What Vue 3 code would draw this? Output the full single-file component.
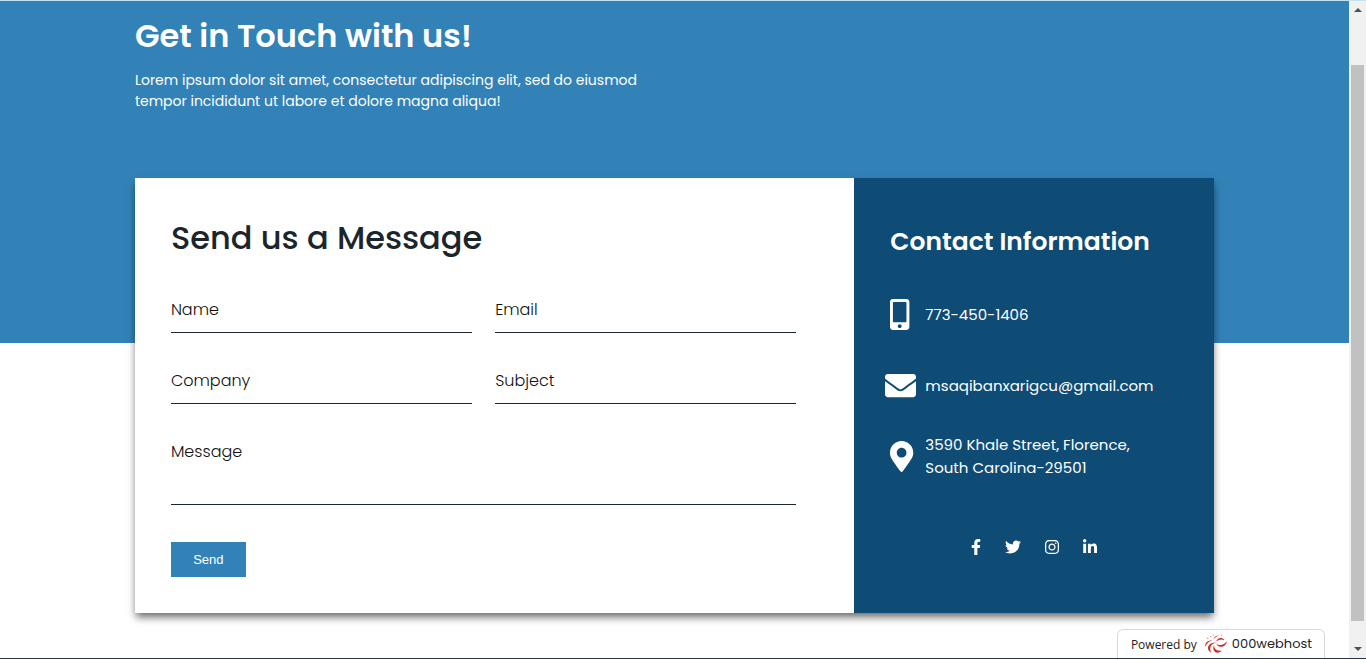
<script setup>
import { ref } from 'vue'

const fields = [
  { id: 'name', label: 'Name', type: 'text' },
  { id: 'email', label: 'Email', type: 'email' },
  { id: 'company', label: 'Company', type: 'text' },
  { id: 'subject', label: 'Subject', type: 'text' }
]
const form = ref({ name: '', email: '', company: '', subject: '', message: '' })

const contacts = [
  {
    id: 'phone',
    viewBox: '0 0 320 512',
    path: 'M272 0H48C21.500 0 0 21.500 0 48v416c0 26.500 21.500 48 48 48h224c26.500 0 48-21.500 48-48V48c0-26.500-21.500-48-48-48zM160 480c-17.700 0-32-14.300-32-32s14.300-32 32-32 32 14.300 32 32-14.300 32-32 32zm112-108c0 6.600-5.400 12-12 12H60c-6.600 0-12-5.400-12-12V60c0-6.600 5.400-12 12-12h200c6.600 0 12 5.400 12 12v312z',
    lines: ['773-450-1406']
  },
  {
    id: 'mail',
    viewBox: '0 0 512 512',
    path: 'M502.300 190.800c3.900-3.100 9.700-.2 9.700 4.700V400c0 26.500-21.500 48-48 48H48c-26.500 0-48-21.500-48-48V195.600c0-5 5.700-7.800 9.700-4.700 22.400 17.400 52.100 39.500 154.100 113.600 21.100 15.400 56.700 47.800 92.200 47.600 35.700.3 72-32.800 92.300-47.600 102-74.100 131.600-96.300 154-113.700zM256 320c23.200.4 56.600-29.200 73.400-41.400 132.700-96.300 142.800-104.700 173.400-128.700 5.800-4.500 9.200-11.500 9.200-18.900v-19c0-26.500-21.500-48-48-48H48c-26.500 0-48 21.500-48 48v19c0 7.400 3.400 14.300 9.200 18.900 30.600 23.900 40.700 32.400 173.400 128.700 16.800 12.200 50.200 41.800 73.400 41.400z',
    lines: ['msaqibanxarigcu@gmail.com']
  },
  {
    id: 'place',
    viewBox: '0 0 384 512',
    path: 'M172.268 501.670C26.970 291.031 0 269.413 0 192 0 85.961 85.961 0 192 0s192 85.961 192 192c0 77.413-26.970 99.031-172.268 309.670-9.535 13.774-29.930 13.773-39.464 0zM192 272c44.183 0 80-35.817 80-80s-35.817-80-80-80-80 35.817-80 80 35.817 80 80 80z',
    lines: ['3590 Khale Street, Florence,', 'South Carolina-29501']
  }
]

const socials = [
  {
    name: 'Facebook',
    viewBox: '0 0 320 512',
    path: 'M279.140 288l14.220-92.660h-88.910v-60.130c0-25.350 12.420-50.060 52.240-50.060h40.420V6.260S260.430 0 225.360 0c-73.220 0-121.080 44.380-121.080 124.720v70.620H22.890V288h81.390v224h100.170V288z'
  },
  {
    name: 'Twitter',
    viewBox: '0 0 512 512',
    path: 'M459.370 151.716c.325 4.548.325 9.097.325 13.645 0 138.720-105.583 298.558-298.558 298.558-59.452 0-114.680-17.219-161.137-47.106 8.447.974 16.568 1.299 25.340 1.299 49.055 0 94.213-16.568 130.274-44.832-46.132-.975-84.792-31.188-98.112-72.772 6.498.974 12.995 1.624 19.818 1.624 9.421 0 18.843-1.300 27.614-3.573-48.081-9.747-84.143-51.980-84.143-102.985v-1.299c13.969 7.797 30.214 12.670 47.431 13.319-28.264-18.843-46.781-51.005-46.781-87.391 0-19.492 5.197-37.360 14.294-52.954 51.655 63.675 129.300 105.258 216.365 109.807-1.624-7.797-2.599-15.918-2.599-24.040 0-57.828 46.782-104.934 104.934-104.934 30.213 0 57.502 12.670 76.670 33.137 23.715-4.548 46.456-13.320 66.599-25.340-7.798 24.366-24.366 44.833-46.132 57.827 21.117-2.273 41.584-8.122 60.426-16.243-14.292 20.791-32.161 39.308-52.628 54.253z'
  },
  {
    name: 'Instagram',
    viewBox: '0 0 448 512',
    path: 'M224.100 141c-63.600 0-114.900 51.300-114.900 114.900s51.300 114.900 114.900 114.900S339 319.500 339 255.900 287.700 141 224.100 141zm0 189.600c-41.100 0-74.700-33.500-74.700-74.700s33.500-74.700 74.700-74.700 74.700 33.500 74.700 74.700-33.600 74.700-74.700 74.700zm146.400-194.300c0 14.900-12 26.800-26.800 26.800-14.900 0-26.800-12-26.800-26.800s12-26.800 26.800-26.800 26.800 12 26.800 26.800zm76.100 27.200c-1.700-35.900-9.900-67.700-36.200-93.900-26.200-26.200-58-34.400-93.900-36.200-37-2.100-147.900-2.100-184.900 0-35.800 1.700-67.600 9.900-93.900 36.100s-34.400 58-36.200 93.900c-2.100 37-2.100 147.900 0 184.900 1.700 35.900 9.900 67.700 36.200 93.900s58 34.400 93.900 36.200c37 2.100 147.900 2.100 184.900 0 35.900-1.700 67.700-9.900 93.900-36.200 26.200-26.200 34.400-58 36.200-93.900 2.100-37 2.100-147.800 0-184.800zM398.800 388c-7.800 19.600-22.900 34.700-42.600 42.600-29.500 11.700-99.500 9-132.100 9s-102.700 2.600-132.100-9c-19.600-7.800-34.700-22.900-42.600-42.600-11.700-29.500-9-99.500-9-132.100s-2.600-102.700 9-132.100c7.800-19.600 22.900-34.700 42.600-42.600 29.500-11.700 99.500-9 132.100-9s102.700-2.600 132.100 9c19.600 7.800 34.700 22.900 42.600 42.600 11.700 29.500 9 99.500 9 132.100s2.700 102.700-9 132.100z'
  },
  {
    name: 'LinkedIn',
    viewBox: '0 0 448 512',
    path: 'M100.280 448H7.400V148.900h92.880zM53.790 108.100C24.090 108.100 0 83.500 0 53.800a53.790 53.790 0 0 1 107.580 0c0 29.700-24.100 54.300-53.790 54.300zM447.900 448h-92.680V302.400c0-34.700-.7-79.200-48.290-79.200-48.290 0-55.690 37.700-55.690 76.700V448h-92.780V148.900h89.080v40.800h1.300c12.400-23.500 42.690-48.300 87.880-48.300 94 0 111.280 61.900 111.280 142.300V448z'
  }
]
</script>

<template>
  <div class="window">
    <main class="page">
      <section class="hero">
        <h1>Get in Touch with us!</h1>
        <p>Lorem ipsum dolor sit amet, consectetur adipiscing elit, sed do eiusmod<br>tempor incididunt ut labore et dolore magna aliqua!</p>
      </section>

      <section class="card">
        <form class="message" @submit.prevent>
          <h2>Send us a Message</h2>
          <div class="fields">
            <input
              v-for="f in fields"
              :key="f.id"
              v-model="form[f.id]"
              :type="f.type"
              :placeholder="f.label"
              :aria-label="f.label"
            >
            <textarea v-model="form.message" placeholder="Message" aria-label="Message"></textarea>
          </div>
          <button class="send" type="submit">Send</button>
        </form>

        <aside class="info">
          <h3>Contact Information</h3>
          <ul class="contacts">
            <li v-for="c in contacts" :key="c.id">
              <span class="mark">
                <svg :class="c.id" :viewBox="c.viewBox" aria-hidden="true"><path :d="c.path" /></svg>
              </span>
              <span class="detail">
                <span v-for="line in c.lines" :key="line">{{ line }}</span>
              </span>
            </li>
          </ul>
          <nav class="socials">
            <a v-for="s in socials" :key="s.name" href="#" :aria-label="s.name">
              <svg :viewBox="s.viewBox" aria-hidden="true"><path :d="s.path" /></svg>
            </a>
          </nav>
        </aside>
      </section>

      <a class="host" href="#">
        <span class="powered">Powered by</span>
        <svg viewBox="0 0 24 20" aria-hidden="true">
          <g fill="#c8322d">
            <path d="M1 13C1 8 4 6 9 6.500C5 7.300 3 9 1 13Z" />
            <path d="M7 18.500C1 15 4 8 13 8.500C7 9.500 5 13 7 18.500Z" />
            <path d="M10 11C10 15 13 17.500 18 16.500C14 21 7 18 10 11Z" />
            <path d="M12 9.500C15 12 20 11.500 23 7C22 13.500 15 15 12 9.500Z" />
            <path d="M12 7.500C14 3.500 18 3 20.500 6C17 4.800 15 5.500 12 7.500Z" />
            <path d="M9.500 5.500C10 3 12 1.500 15 1.500C12 2.500 11 3.500 9.500 5.500Z" />
          </g>
          <path d="M3 4.500L4.500 4M6 2L7 3M9 .5L9.500 1.500M17 1L18 1.500" fill="none" stroke="#dc8580" />
        </svg>
        <span class="brand">000webhost</span>
      </a>
    </main>

    <div class="scrollbar" aria-hidden="true">
      <svg viewBox="0 0 8 4"><path d="M0 4L4 0L8 4Z" /></svg>
      <span class="thumb"></span>
      <svg viewBox="0 0 8 4"><path d="M0 0L4 4L8 0Z" /></svg>
    </div>
  </div>
</template>

<style>
body {
  margin: 0;
  background: #fff;
}
</style>

<style scoped>
* {
  box-sizing: border-box;
}

.window {
  display: flex;
  min-height: 100vh;
  border-top: 1px solid #c5e0f0;
  border-bottom: 1px solid #26394a;
  font-family: Poppins, Inter, "Open Sans", sans-serif;
}

.page {
  position: relative;
  flex: 1;
  min-width: 0;
}

.hero {
  height: 342px;
  padding: 14px 10% 0;
  background: #3282b8;
  color: #fff;
}

h1,
h2,
h3,
p,
ul {
  margin: 0;
  padding: 0;
}

h1 {
  font-size: 32px;
  line-height: 42px;
  font-weight: 600;
}

.hero p {
  margin-top: 13px;
  font-size: 14px;
  line-height: 21px;
}

.card {
  display: grid;
  grid-template-columns: 2fr 1fr;
  margin: -165px 10% 0;
  box-shadow: 0 5px 8px -1px rgba(0, 0, 0, 0.6);
}

.message {
  padding: 36px 58px 36px 36px;
  background: #fff;
}

h2 {
  color: #1b262c;
  font-size: 32px;
  line-height: 48px;
  font-weight: 500;
}

.fields {
  display: grid;
  grid-template-columns: 1fr 1fr;
  gap: 36px 23px;
  margin-top: 36px;
}

input,
textarea {
  display: block;
  width: 100%;
  height: 35px;
  margin: 0;
  padding: 0 0 11px;
  border: 0;
  border-bottom: 1px solid #1b262c;
  border-radius: 0;
  outline: 0;
  background: transparent;
  color: #111;
  font: 300 16px/24px Poppins, Inter, "Open Sans", sans-serif;
  resize: none;
}

textarea {
  grid-column: 1 / -1;
  height: 65px;
}

input::placeholder,
textarea::placeholder {
  color: #111;
  opacity: 1;
}

.send {
  display: block;
  width: 75px;
  height: 35px;
  margin-top: 37px;
  padding: 0;
  border: 0;
  background: #3282b8;
  color: #fff;
  font: 13px "Liberation Sans", sans-serif;
}

.info {
  padding: 46px 36px 36px;
  background: #0f4c75;
  color: #fff;
}

h3 {
  font-size: 25px;
  line-height: 36px;
  font-weight: 600;
  white-space: nowrap;
}

.contacts {
  display: grid;
  gap: 25px;
  margin-top: 31px;
  list-style: none;
}

.contacts li {
  display: flex;
  align-items: center;
  gap: 9px;
  height: 46px;
  margin-left: -5px;
}

.mark {
  display: flex;
  flex: none;
  width: 31px;
  padding-left: 5px;
}

.mark svg {
  height: 31px;
  fill: #fff;
}

.mark .mail {
  width: 31px;
  flex: none;
  margin-left: -5px;
}

.detail {
  display: grid;
  font-size: 15px;
  line-height: 23px;
  white-space: nowrap;
}

.socials {
  display: flex;
  justify-content: center;
  gap: 24px;
  margin-top: 60px;
}

.socials a {
  display: flex;
}

.socials svg {
  height: 16px;
  fill: #fff;
}

.host {
  position: absolute;
  right: 24px;
  bottom: 0;
  display: flex;
  align-items: center;
  height: 29px;
  padding: 0 12px 0 13px;
  border: 1px solid #d5dadd;
  border-bottom: 0;
  border-radius: 6px 6px 0 0;
  background: #fff;
  color: #222;
  text-decoration: none;
  white-space: nowrap;
}

.powered {
  font-family: "Open Sans", sans-serif;
  font-size: 12px;
}

.host svg {
  flex: none;
  width: 24px;
  height: 20px;
  margin: 0 4px 0 7px;
}

.brand {
  font-size: 13px;
}

.scrollbar {
  display: flex;
  flex: none;
  flex-direction: column;
  align-items: center;
  width: 17px;
  padding: 7px 0;
  background: #f1f1f1;
}

.scrollbar svg {
  width: 8px;
  height: 4px;
  fill: #505050;
}

.thumb {
  flex: 1;
  width: 13px;
  margin: 53px 0 26px;
  background: #c1c1c1;
}
</style>
